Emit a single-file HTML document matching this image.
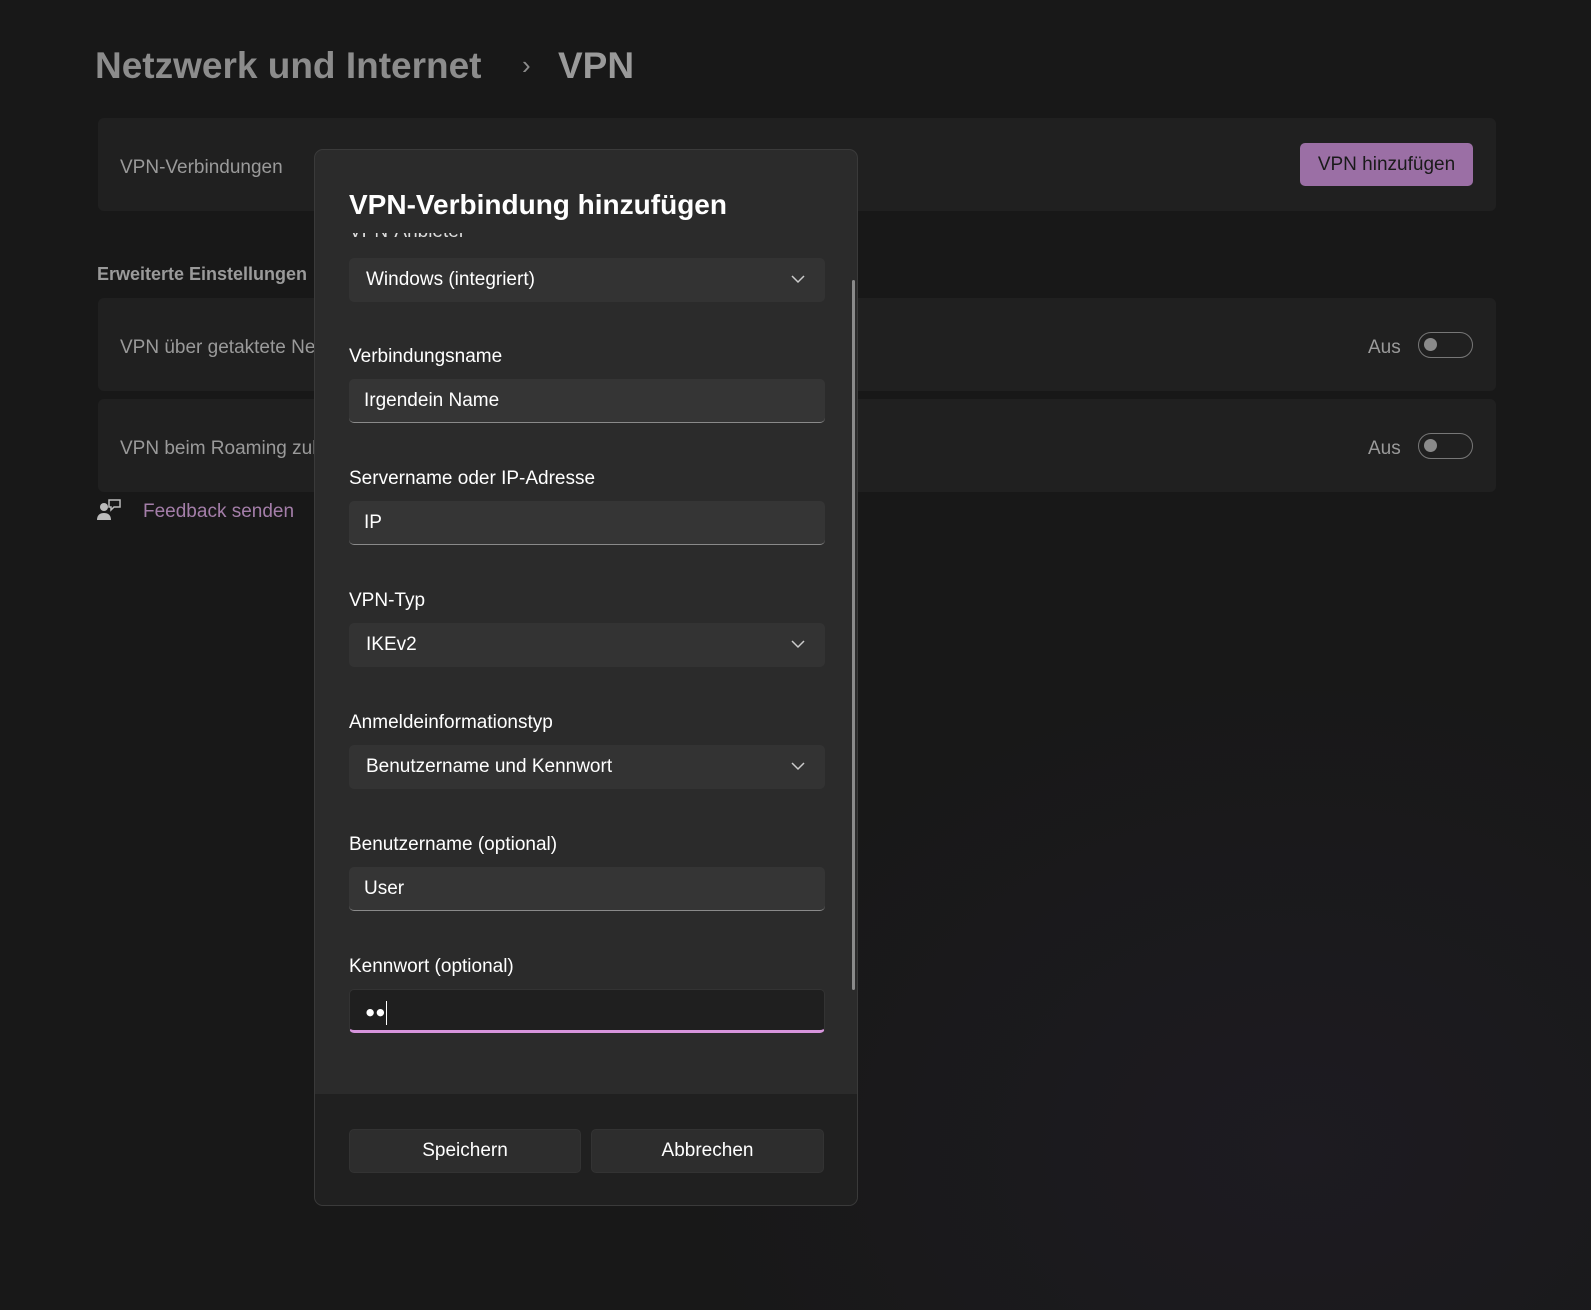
<!DOCTYPE html>
<html><head><meta charset="utf-8"><style>
*{margin:0;padding:0;box-sizing:border-box}
body{width:1591px;height:1310px;overflow:hidden;background:radial-gradient(ellipse 900px 700px at 1300px 1150px,#1d1b21 0%,#181818 70%);font-family:"Liberation Sans",sans-serif;color:#9a9a9a;position:relative}
.a{position:absolute;white-space:nowrap}
.card{position:absolute;left:98px;width:1398px;background:#202020;border-radius:6px}
.tog{position:absolute;left:1418px;width:55px;height:26px;border:1.5px solid #777;border-radius:13px}
.tog:after{content:"";position:absolute;left:5px;top:5px;width:13px;height:13px;border-radius:50%;background:#8a8a8a}
.dlg{position:absolute;left:314px;top:149px;width:544px;height:1057px;background:#2b2b2b;border:1px solid #3a3a3a;border-radius:9px;overflow:hidden}
.lbl{position:absolute;left:34px;font-size:19px;color:#fff}
.fld{position:absolute;left:34px;width:476px;height:44px;border-radius:5px;background:#353535;font-size:19px;color:#fff;padding:11px 15px;border-bottom:1px solid #8a8a8a}
.dd{background:#333;border-bottom:none;padding-left:17px}
.dd svg{position:absolute;right:20px;top:16px}
.btn{position:absolute;top:979px;height:44px;border-radius:5px;background:#2d2d2d;border:1px solid #333;color:#fff;font-size:19px;text-align:center;line-height:42px}
</style></head><body>
<div class="a" style="left:95px;top:45px;font-size:37px;font-weight:bold;color:#8c8c8c">Netzwerk und Internet</div>
<div class="a" style="left:522px;top:50px;font-size:26px;color:#8c8c8c">›</div>
<div class="a" style="left:558px;top:45px;font-size:37px;font-weight:bold;color:#9a9a9a">VPN</div>

<div class="card" style="top:118px;height:93px"></div>
<div class="a" style="left:120px;top:157px;font-size:19px">VPN-Verbindungen</div>
<div class="a" style="left:1300px;top:143px;width:173px;height:43px;background:#9b6fa5;border-radius:5px;color:#1a1a1a;font-size:19px;text-align:center;line-height:43px">VPN hinzufügen</div>

<div class="a" style="left:97px;top:264px;font-size:18px;font-weight:bold;color:#9a9a9a">Erweiterte Einstellungen</div>
<div class="card" style="top:298px;height:93px"></div>
<div class="a" style="left:120px;top:337px;font-size:19px">VPN über getaktete Netzwerke</div>
<div class="a" style="left:1368px;top:337px;font-size:19px">Aus</div>
<div class="tog" style="top:332px"></div>
<div class="card" style="top:399px;height:93px"></div>
<div class="a" style="left:120px;top:438px;font-size:19px">VPN beim Roaming zulassen</div>
<div class="a" style="left:1368px;top:438px;font-size:19px">Aus</div>
<div class="tog" style="top:433px"></div>

<svg class="a" style="left:97px;top:498px" width="24" height="24" viewBox="0 0 24 24"><circle cx="7" cy="9" r="4" fill="#bbb"/><path d="M0 22c0-5 3-7 7-7s7 2 7 7z" fill="#bbb"/><path d="M12 2h11v7h-6l-3 3v-3h-2z" fill="none" stroke="#bbb" stroke-width="1.5"/></svg>
<div class="a" style="left:143px;top:501px;font-size:19px;color:#a47ea9">Feedback senden</div>

<div class="dlg">
 <div class="a" style="left:34px;top:39px;font-size:28px;font-weight:bold;color:#fff">VPN-Verbindung hinzufügen</div>
 <div class="a" style="left:34px;top:83px;width:120px;height:5px;overflow:hidden;font-size:19px;color:#ddd"><div style="margin-top:-12px">VPN-Anbieter</div></div>
 <div class="fld dd" style="top:108px">Windows (integriert)<svg width="14" height="10" viewBox="0 0 14 10"><path d="M1 2l6 6 6-6" fill="none" stroke="#ccc" stroke-width="1.5"/></svg></div>
 <div class="lbl" style="top:196px">Verbindungsname</div>
 <div class="fld" style="top:229px">Irgendein Name</div>
 <div class="lbl" style="top:318px">Servername oder IP-Adresse</div>
 <div class="fld" style="top:351px">IP</div>
 <div class="lbl" style="top:440px">VPN-Typ</div>
 <div class="fld dd" style="top:473px">IKEv2<svg width="14" height="10" viewBox="0 0 14 10"><path d="M1 2l6 6 6-6" fill="none" stroke="#ccc" stroke-width="1.5"/></svg></div>
 <div class="lbl" style="top:562px">Anmeldeinformationstyp</div>
 <div class="fld dd" style="top:595px">Benutzername und Kennwort<svg width="14" height="10" viewBox="0 0 14 10"><path d="M1 2l6 6 6-6" fill="none" stroke="#ccc" stroke-width="1.5"/></svg></div>
 <div class="lbl" style="top:684px">Benutzername (optional)</div>
 <div class="fld" style="top:717px">User</div>
 <div class="lbl" style="top:806px">Kennwort (optional)</div>
 <div class="fld" style="top:839px;background:#1f1f1f;border:1px solid #333;border-bottom:3px solid #d795dd;font-size:17px;padding-top:11px">●●<span style="display:inline-block;width:1px;height:24px;background:#fff;vertical-align:middle"></span></div>
 <div class="a" style="left:537px;top:130px;width:3px;height:710px;background:#8a8a8a;border-radius:2px"></div>
 <div class="a" style="left:0;top:944px;width:544px;height:120px;background:#202020"></div>
 <div class="btn" style="left:34px;width:232px">Speichern</div>
 <div class="btn" style="left:276px;width:233px">Abbrechen</div>
</div>
</body></html>
